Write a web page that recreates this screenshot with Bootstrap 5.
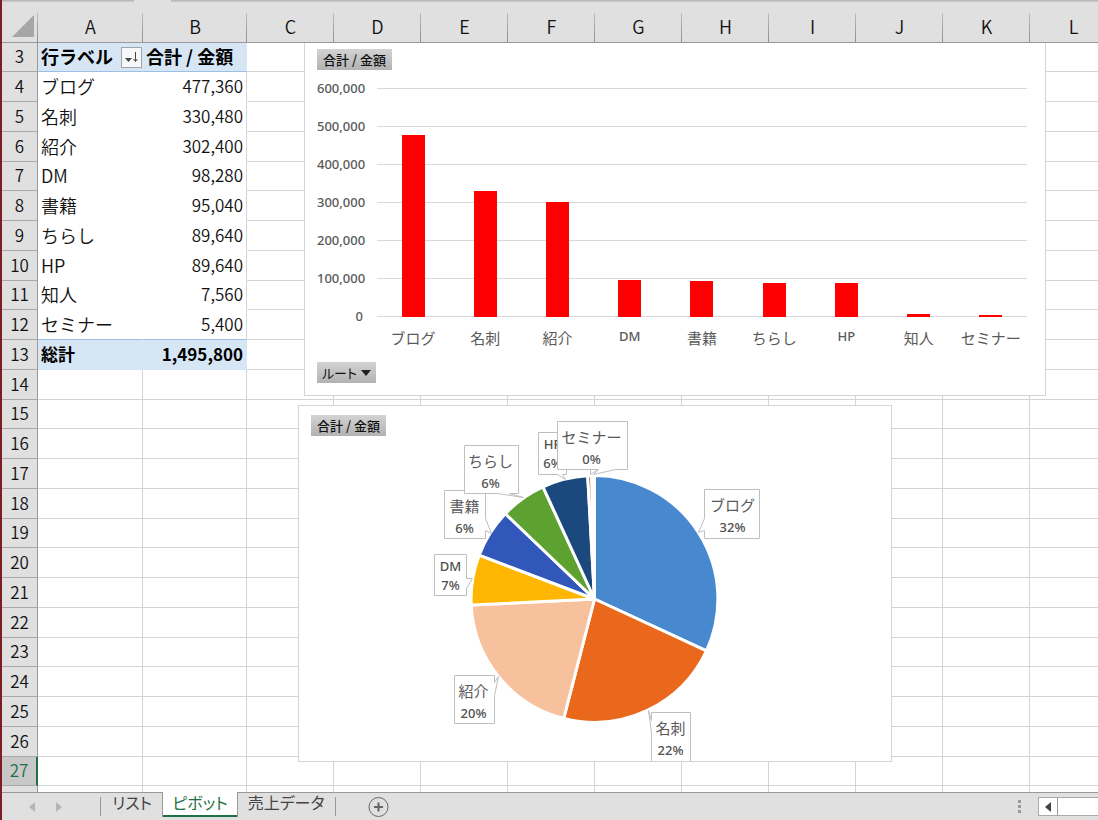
<!DOCTYPE html>
<html lang="ja">
<head>
<meta charset="utf-8">
<meta name="viewport" content="width=device-width, initial-scale=1">
<title>ピボット</title>
<link href="https://cdn.jsdelivr.net/npm/bootstrap@5.3.0/dist/css/bootstrap.min.css" rel="stylesheet">
<style>
  :root { --line:#d4d4d4; --head:#e0e0e0; --edge:#999; --green:#1e7145; }
  body { font-family:"Noto Sans CJK JP",sans-serif; font-size:17px; color:#111; border-left:2px solid #7d1f22; }
  .sheet { min-height:0; }
  .cells { table-layout:fixed; border-collapse:separate; border-spacing:0; width:100%; line-height:24px; }
  .cells th, .cells td { padding:0 3px; border-right:1px solid var(--line); border-bottom:1px solid var(--line); white-space:nowrap; }
  .cells tbody td { font-size:18px; font-weight:350; padding-bottom:2px; }
  .cells tbody tr { height:30px; }
  .cells tbody tr:nth-child(4n+1) { height:29px; }
  .cells .rowhead { width:36px; }
  .cells .col-a { width:105px; }
  .cells .col-b { width:104px; }
  .cells .col-n { width:87px; }
  .cells thead th { height:43px; padding:10px 0 0; background:linear-gradient(to bottom,#bdbdbd,#8e8e8e) right bottom/1px 29px no-repeat var(--head); border-right:0; border-bottom-color:var(--edge); font-size:18px; font-weight:350; text-align:center; }
  .cells tbody th { background:var(--head); border-right-color:var(--edge); border-bottom-color:#a9a9a9; font-weight:350; font-size:17px; text-align:center; padding:0 0 2px; color:#111; }
  .cells tbody th.current { background:#c8c8c8; color:var(--green); border-right:2px solid var(--green); }
  .cells td.inpivot { border-color:#fff; }
  .cells td.inpivot + td.inpivot { border-right-color:var(--line); }
  .cells tbody tr:not(.band) td.inpivot.text-end { font-size:17px; }
  .cells tr.band td.inpivot { background:#d6e6f5; border-color:#d6e6f5; font-weight:700; color:#000; }
  .cells tr.grand td.inpivot { font-size:17px; }
  .cells tr.band:first-child td.inpivot, .cells tr.pre td.inpivot { border-bottom-color:#9bbfe5; }
  .sortbtn { width:21px; height:21px; border:1px solid #a0a4aa; background:#f7f8fa; }
  .topstrip { top:0; left:0; height:2px; background:linear-gradient(#b5b5b5,#cacaca); }
  .topstrip .opening { margin-left:12%; width:37px; height:2px; background:var(--head); }
  .chartbox { background:#fff; border:1px solid var(--line); }
  .barbox { left:302px; top:43px; width:742px; border-top:0; padding:6px 18px 12px 12px; }
  .piebox { left:296px; top:405px; width:594px; padding:0; }
  .field { border:0; height:21px; padding:0 6px; font-size:13px; line-height:21px; font-weight:500; color:#111; background:linear-gradient(#d3d3d3,#b2b2b2); }
  .piefield { left:12px; top:9px; }
  .rootfield { margin-top:12px; padding:0 5px; font-weight:400; font-feature-settings:"palt"; }
  .axis { width:46px; font:500 13px/38px "Noto Sans",sans-serif; color:#595959; text-align:right; margin-top:-1px; }
  .plotwrap { margin:18px 0 0 14px; }
  .plot { height:229px; background:repeating-linear-gradient(to bottom,#d9d9d9 0 1px,transparent 1px 38px); }
  .bar { width:23px; background:#f00; }
  .cats { margin-top:9px; font-size:15px; line-height:24px; color:#595959; }
  .latin { font:500 13px/20px "Noto Sans",sans-serif; }
  .slot { flex:1 1 0; }
  .piebox text { font-size:15px; fill:#595959; text-anchor:middle; }
  .piebox text.pct { font:500 13px "Noto Sans",sans-serif; fill:#505050; }
  .slices path { stroke:#fff; stroke-width:3; stroke-linejoin:round; }
  .callouts path { fill:#fff; stroke:#bfbfbf; }
  .tabbar { height:28px; background:var(--head); border-top:1px solid var(--edge); font-size:16px; line-height:18px; font-feature-settings:"palt"; }
  .tabbar a { color:#444; text-decoration:none; }
  .tabbar button { border:0; background:none; padding:0; line-height:0; }
  .arrows { width:98px; padding-left:26px; gap:15px; }
  .tabs { height:24px; }
  .tabs a { width:74px; text-align:center; }
  .tabs a.first { width:62px; }
  .tabs a.last { width:98px; }
  .tabs a.active { background:#fff; color:var(--green); border-bottom:2px solid var(--green); margin-top:-1px; padding-top:1px; box-shadow:-1px 0 var(--edge),1px 0 var(--edge); }
  .tabs .rule { width:1px; height:19px; margin-top:4px; background:#999; }
  .scroller { width:60px; height:19px; border:1px solid #aaa; border-right:0; background:#fff; }
  .scroller button { width:19px; border-right:1px solid #999; }
</style>
</head>
<body class="d-flex flex-column vh-100 overflow-hidden">
<main class="sheet position-relative flex-grow-1 overflow-hidden">
  <table class="cells">
    <thead><tr id="letters"></tr></thead>
    <tbody id="rows"></tbody>
  </table>
  <div class="topstrip position-absolute w-100"><div class="opening"></div></div>

  <section class="chartbox barbox position-absolute" aria-label="棒グラフ">
    <button class="field d-block" type="button">合計 / 金額</button>
    <div class="d-flex">
      <div class="axis"><div>600,000</div><div>500,000</div><div>400,000</div><div>300,000</div><div>200,000</div><div>100,000</div><div>0</div></div>
      <div class="plotwrap flex-grow-1">
        <div class="plot d-flex align-items-end" id="bars"></div>
        <div class="cats d-flex text-center text-nowrap" id="cats"></div>
      </div>
    </div>
    <button class="field rootfield d-flex align-items-center gap-1" type="button">ルート
      <svg width="10" height="6" aria-hidden="true"><path d="M0 0h10L5 6z" fill="#222"/></svg>
    </button>
  </section>

  <section class="chartbox piebox position-absolute" aria-label="円グラフ">
    <button class="field piefield position-absolute" type="button">合計 / 金額</button>
    <svg class="d-block w-100" viewBox="0 0 592 355">
      <g class="slices" transform="translate(295.5 193) scale(.995)">
        <path fill="#4888cf" d="M0 0V-124A124 124 0 0 1 112.5 52.2z"/>
        <path fill="#e9681c" d="M0 0L112.5 52.2A124 124 0 0 1 -30.9 120z"/>
        <path fill="#f6c19c" d="M0 0L-30.9 120A124 124 0 0 1 -123.9 6.1z"/>
        <path fill="#ffb600" d="M0 0L-123.9 6.1A124 124 0 0 1 -115.9 -44.1z"/>
        <path fill="#3157ba" d="M0 0L-115.9 -44.1A124 124 0 0 1 -89.6 -85.7z"/>
        <path fill="#5da130" d="M0 0L-89.6 -85.7A124 124 0 0 1 -51.8 -112.7z"/>
        <path fill="#1c497d" d="M0 0L-51.8 -112.7A124 124 0 0 1 -6.8 -123.8z"/>
        <path fill="#9e480e" d="M0 0L-6.8 -123.8A124 124 0 0 1 -2.8 -124z"/>
        <path fill="#fff" d="M0 0L-2.8 -124A124 124 0 0 1 0 -124z"/>
      </g>
      <g class="callouts" transform="translate(.5 -.5)">
        <path d="M405 84h55v49h-55v-8l-6 2 6-14z"/>
        <text x="433" y="105">ブログ</text><text class="pct" x="433" y="126">32%</text>
        <path d="M352 358v-31l-3-22 3 10v-8h39v51"/>
        <text x="371" y="328">名刺</text><text class="pct" x="371" y="349">22%</text>
        <path d="M155 270h40v7l4-6-4 19v28h-40z"/>
        <text x="174" y="291">紹介</text><text class="pct" x="174" y="312">20%</text>
        <path d="M135 149h32v24h6l-6 10v7h-32z"/>
        <text class="pct" x="151" y="165">DM</text><text class="pct" x="151" y="184">7%</text>
        <path d="M145 85h41v28l6 15-6-3v8h-41z"/>
        <text x="165" y="106">書籍</text><text class="pct" x="165" y="127">6%</text>
        <path d="M165 40h54v48h-9l14 4-26-4h-33z"/>
        <text x="191" y="61">ちらし</text><text class="pct" x="191" y="82">6%</text>
        <path d="M239 27h28v42h-4l3 5-8-5h-19z"/>
        <text class="pct" x="253" y="43">HP</text><text class="pct" x="253" y="62">6%</text>
        <path d="M291 64v5l6-4"/>
        <path d="M258 16h70v48h-12l-22 5 5-5h-41z"/>
        <text x="292" y="37">セミナー</text><text class="pct" x="292" y="58">0%</text>
      </g>
    </svg>
  </section>
</main>

<footer class="tabbar d-flex flex-shrink-0 align-items-start">
  <div class="arrows d-flex h-100 align-items-center">
    <button type="button" aria-label="前のシート"><svg width="8" height="10"><path d="M7 0v10L1 5z" fill="#b5b5b5"/></svg></button>
    <button type="button" aria-label="次のシート" class="ms-1"><svg width="8" height="10"><path d="M1 0v10l6-5z" fill="#b5b5b5"/></svg></button>
  </div>
  <nav class="tabs d-flex">
    <span class="rule"></span>
    <a class="first" href="#">リスト</a>
    <a class="active" href="#" aria-current="page">ピボット</a>
    <a class="last" href="#">売上データ</a>
    <span class="rule"></span>
  </nav>
  <button class="mt-1 ms-4 ps-2" type="button" aria-label="新しいシート">
    <svg width="21" height="21" viewBox="0 0 42 42" fill="none" stroke="#666"><circle cx="21" cy="20" r="19" stroke-width="2"/><path d="M12 20h18M21 11v18" stroke-width="4"/></svg>
  </button>
  <div class="d-flex ms-auto mt-1 align-items-center">
    <svg class="me-3" width="4" height="14" fill="#999" aria-hidden="true"><path d="M0 0h3v3H0zM0 5h3v3H0zM0 10h3v3H0z"/></svg>
    <div class="scroller d-flex"><button type="button" aria-label="左へスクロール"><svg width="6" height="10"><path d="M6 0v10L0 5z" fill="#444"/></svg></button></div>
  </div>
</footer>

<script src="https://cdn.jsdelivr.net/npm/bootstrap@5.3.0/dist/js/bootstrap.bundle.min.js"></script>
<script>
  const data = [["ブログ",477360],["名刺",330480],["紹介",302400],["DM",98280],["書籍",95040],["ちらし",89640],["HP",89640],["知人",7560],["セミナー",5400]];
  const letters = "ABCDEFGHIJKL".split("");
  const widthClass = i => i === 0 ? "col-a" : i === 1 ? "col-b" : "col-n";

  document.getElementById("letters").innerHTML =
    '<th class="rowhead"><svg class="d-block ms-auto me-1" width="22" height="22" aria-hidden="true"><path d="M22 0v22H0z" fill="#a6a6a6"/></svg></th>' +
    letters.map((l, i) => `<th class="${widthClass(i)}" scope="col">${l}</th>`).join("");

  const sortIcon = '<button class="sortbtn p-0 d-flex align-items-center justify-content-center" type="button" aria-label="行ラベルの並べ替え"><svg width="15" height="15"><path d="M1 8h7l-3.5 4z" fill="#444"/><path d="M11.5 2v9M9.5 9l2 2.5 2-2.5" fill="none" stroke="#444"/></svg></button>';
  let html = "";
  for (let r = 3; r <= 28; r++) {
    let a = "", b = "", cls = "", piv = r <= 13 ? "inpivot" : "";
    if (r === 3) { a = `<div class="d-flex justify-content-between align-items-end"><span>行ラベル</span>${sortIcon}</div>`; b = "合計 / 金額"; cls = "band"; }
    else if (r < 13) { a = data[r - 4][0]; b = data[r - 4][1].toLocaleString("en-US"); if (r === 12) cls = "pre"; }
    else if (r === 13) { a = "総計"; b = "1,495,800"; cls = "band grand"; }
    html += `<tr class="${cls}"><th scope="row" class="${r === 27 ? "current" : ""}">${r < 28 ? r : ""}</th><td class="${piv} ${r === 3 ? "pe-0" : ""}">${a}</td><td class="${piv} ${r === 3 ? "text-start" : "text-end"}">${b}</td>${"<td></td>".repeat(10)}</tr>`;
  }
  document.getElementById("rows").innerHTML = html;

  document.getElementById("bars").innerHTML = data.map(d =>
    `<div class="slot h-100 d-flex align-items-end justify-content-center"><div class="bar" style="height:${(d[1] / 6000).toFixed(2)}%"></div></div>`).join("");
  document.getElementById("cats").innerHTML = data.map(d =>
    `<div class="slot ${/^[A-Z]+$/.test(d[0]) ? "latin" : ""}">${d[0]}</div>`).join("");
</script>
</body>
</html>
